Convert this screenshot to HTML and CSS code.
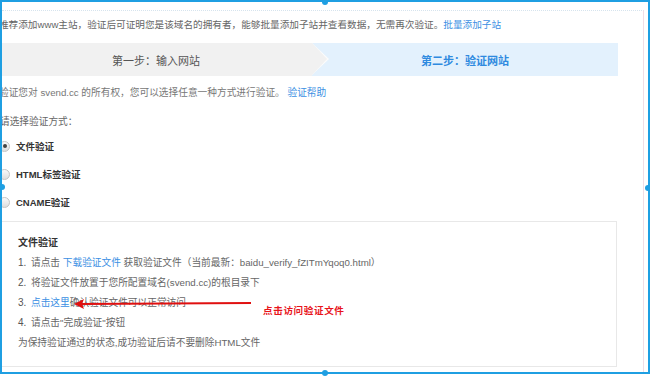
FILE: index.html
```html
<!DOCTYPE html>
<html lang="zh-CN">
<head>
    <meta charset="UTF-8">
    <title>验证网站</title>
    <link rel="stylesheet" href="styles.css">
</head>
<body>
    <div class="shot">
        <div class="frame">
            <div class="page">
                <p class="notice">推荐添加www主站，验证后可证明您是该域名的拥有者，能够批量添加子站并查看数据，无需再次验证。<a href="#">批量添加子站</a></p>

                <div class="steps">
                    <div class="step step-one">第一步：输入网站</div>
                    <div class="step step-two">第二步：验证网站</div>
                </div>

                <p class="desc">验证您对 svend.cc 的所有权，您可以选择任意一种方式进行验证。 <a href="#">验证帮助</a></p>
                <p class="choose">请选择验证方式：</p>

                <ul class="methods">
                    <li><span class="radio checked"></span>文件验证</li>
                    <li><span class="radio"></span>HTML标签验证</li>
                    <li><span class="radio"></span>CNAME验证</li>
                </ul>

                <div class="box">
                    <h3>文件验证</h3>
                    <p><span class="num">1.</span>请点击 <a href="#">下载验证文件</a> 获取验证文件（当前最新：baidu_verify_fZITmYqoq0.html）</p>
                    <p><span class="num">2.</span>将验证文件放置于您所配置域名(svend.cc)的根目录下</p>
                    <p><span class="num">3.</span><a href="#">点击这里</a>确认验证文件可以正常访问</p>
                    <p><span class="num">4.</span>请点击"完成验证"按钮</p>
                    <p>为保持验证通过的状态,成功验证后请不要删除HTML文件</p>

                    <!-- 标注：红色箭头 -->
                    <svg class="arrow" width="180" height="12" viewBox="0 0 180 12">
                        <line x1="8" y1="6" x2="178" y2="5" stroke="#e01010" stroke-width="2"/>
                        <path d="M1 6 L11 1 L9 6 L11 11 Z" fill="#e01010"/>
                    </svg>
                    <span class="note">点击访问验证文件</span>
                </div>
            </div>
        </div>

        <span class="handle h-top"></span>
        <span class="handle h-left"></span>
        <span class="handle h-right"></span>
        <span class="handle h-bottom"></span>
    </div>
</body>
</html>
```
FILE: styles.css
```css
body {
    margin: 0;
    background: #fff;
    font-family: "Liberation Sans", "Noto Sans CJK SC", sans-serif;
    color: #666;
}

a {
    color: #3b8fe3;
    text-decoration: none;
}

p {
    margin: 0;
}

.shot {
    position: relative;
    width: 650px;
    height: 376px;
    overflow: hidden;
}

.frame {
    width: 650px;
    height: 374px;
    border: 2px solid #1f9fe2;
    box-sizing: border-box;
    overflow: hidden;
    background: #fff;
}

.page {
    width: 641px;
    height: 380px;
    margin-top: 8px;
    border-top: 1px dotted #d6e4ee;
    border-right: 1px solid #f1dde5;
}

.notice {
    margin: 6px 0 0 -3px;
    font-size: 9.65px;
    line-height: 16px;
    white-space: nowrap;
}

/* 步骤条 */
.steps {
    display: flex;
    height: 33px;
    margin: 10px 25px 0 -2px;
    background: #e3f1fd;
}

.step {
    display: flex;
    align-items: center;
    justify-content: center;
    font-size: 11px;
}

.step-one {
    flex: 0 0 312px;
    position: relative;
    background: #f1f1f1;
    color: #555;
}

.step-one::before,
.step-one::after {
    content: "";
    position: absolute;
    top: 0;
    border-style: solid;
    border-color: transparent;
}

.step-one::before {
    right: -17px;
    border-width: 16.5px 0 16.5px 17px;
    border-left-color: #fbfbfb;
}

.step-one::after {
    right: -15px;
    border-width: 16.5px 0 16.5px 15px;
    border-left-color: #f1f1f1;
}

.step-two {
    flex: 1;
    color: #2f8ae0;
    font-weight: bold;
}

.desc {
    margin: 9px 0 0 -3px;
    font-size: 9.7px;
    line-height: 16px;
    color: #777;
    white-space: nowrap;
}

.choose {
    margin: 13px 0 0 -2px;
    font-size: 9.7px;
    line-height: 16px;
    color: #666;
}

/* 验证方式 */
.methods {
    list-style: none;
    margin: 2px 0 0;
    padding: 0;
}

.methods li {
    display: flex;
    align-items: center;
    height: 28px;
    font-size: 9.5px;
    font-weight: bold;
    color: #333;
}

.radio {
    width: 9px;
    height: 9px;
    margin: 0 6px 0 -3px;
    border: 1px solid #c4c4c4;
    border-radius: 50%;
    background: linear-gradient(#fafafa, #dedede);
    box-sizing: content-box;
    display: flex;
    align-items: center;
    justify-content: center;
}

.radio.checked::after {
    content: "";
    width: 4px;
    height: 4px;
    border-radius: 50%;
    background: #444;
}

/* 文件验证说明 */
.box {
    position: relative;
    margin: 5px 26px 0 -4px;
    padding: 11px 0 13px 19px;
    border: 1px solid #e8e8e8;
    font-size: 9.7px;
    color: #666;
}

.box h3 {
    margin: 0;
    font-size: 10px;
    line-height: 20px;
    color: #333;
}

.box p {
    line-height: 20px;
    white-space: nowrap;
}

.num {
    display: inline-block;
    width: 13px;
    font-size: 10px;
    color: #555;
}

.arrow {
    position: absolute;
    left: 74px;
    top: 76px;
}

.note {
    position: absolute;
    left: 264px;
    top: 81px;
    font-size: 9.6px;
    font-weight: bold;
    color: #e8141b;
    letter-spacing: 0.6px;
}

/* 选区手柄 */
.handle {
    position: absolute;
    width: 6px;
    height: 6px;
    border-radius: 50%;
    background: #1f9fe2;
}

.h-top { left: 322px; top: -1px; }
.h-left { left: -1px; top: 184px; }
.h-right { left: 645px; top: 185px; }
.h-bottom { left: 322px; top: 370px; }
```
